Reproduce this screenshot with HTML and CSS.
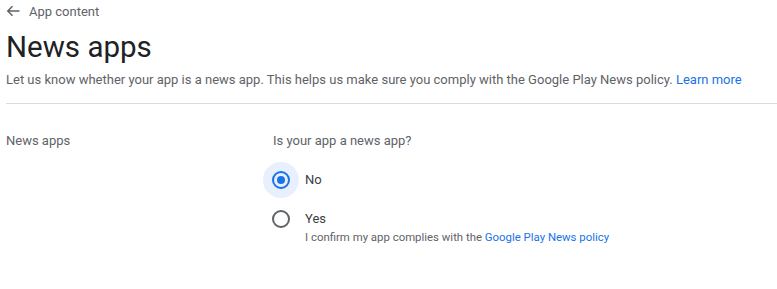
FILE: index.html
```html
<!DOCTYPE html>
<html lang="en">
<head>
  <meta charset="UTF-8" />
  <title>News apps</title>
  <link rel="stylesheet" href="styles.css">
</head>
<body>
  <!-- Header -->
  <div class="header">
    <a class="back" href="#">
      <svg width="14" height="14" viewBox="0 0 14 14"><path d="M13.5 7H1.8M6.5 2.3L1.8 7l4.7 4.7" fill="none" stroke="#5f6368" stroke-width="1.5"/></svg>
      <span>App content</span>
    </a>
    <h1>News apps</h1>
    <p class="desc">Let us know whether your app is a news app. This helps us make sure you comply with the Google Play News policy. <a href="#">Learn more</a></p>
  </div>

  <!-- Form section -->
  <div class="section">
    <div class="label">News apps</div>
    <div class="field">
      <div class="question">Is your app a news app?</div>
      <label class="option">
        <span class="radio checked"><span class="ring"><span class="dot"></span></span></span>
        <span class="text">No</span>
      </label>
      <label class="option">
        <span class="radio"><span class="ring"></span></span>
        <span class="text">Yes
          <span class="hint">I confirm my app complies with the <a href="#">Google Play News policy</a></span>
        </span>
      </label>
    </div>
  </div>
</body>
</html>
```

FILE: styles.css
```css
body {
  margin: 0;
  padding: 0 0 0 6px;
  font-family: Roboto, "Liberation Sans", sans-serif;
  color: #202124;
  background: #fff;
}

a {
  color: #1a73e8;
  text-decoration: none;
}

.header {
  border-bottom: 1px solid #dadce0;
  padding-bottom: 13px;
}

.back {
  display: flex;
  align-items: center;
  gap: 9px;
  height: 20px;
  margin-top: 1px;
  color: #5f6368;
  font-size: 13px;
}

h1 {
  margin: 9px 0 0;
  font-size: 29.5px;
  font-weight: 400;
  line-height: 34px;
}

.desc {
  margin: 6px 0 0;
  font-size: 13px;
  line-height: 20px;
  color: #5f6368;
}

.section {
  display: flex;
  padding-top: 27px;
}

.label {
  width: 267px;
  font-size: 13px;
  line-height: 20px;
  color: #5f6368;
}

.question {
  font-size: 13px;
  line-height: 20px;
  color: #5f6368;
  margin-bottom: 11px;
}

.option {
  display: flex;
  align-items: flex-start;
  gap: 6px;
  margin-left: -10px;
  margin-bottom: 3px;
}

.radio {
  width: 36px;
  height: 36px;
  border-radius: 50%;
  display: flex;
  align-items: center;
  justify-content: center;
  flex-shrink: 0;
}

.radio.checked {
  background: #e8f0fe;
}

.ring {
  width: 14px;
  height: 14px;
  border: 2px solid #5f6368;
  border-radius: 50%;
  display: flex;
  align-items: center;
  justify-content: center;
}

.checked .ring {
  border-color: #1a73e8;
}

.dot {
  width: 8px;
  height: 8px;
  border-radius: 50%;
  background: #1a73e8;
}

.text {
  font-size: 13px;
  line-height: 20px;
  padding-top: 8px;
  color: #3c4043;
}

.hint {
  display: block;
  margin-top: 1px;
  font-size: 11.4px;
  line-height: 14px;
  color: #5f6368;
}
```
